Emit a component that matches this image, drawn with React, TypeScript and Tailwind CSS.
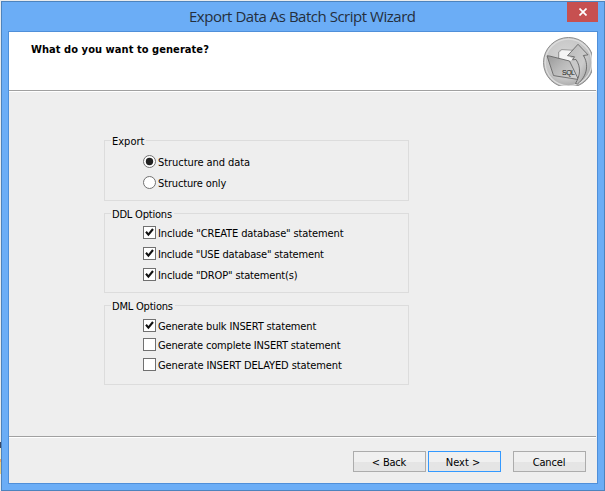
import type { ReactNode } from "react";

const ui = "font-['DejaVu_Sans_Condensed','DejaVu_Sans',sans-serif] [font-stretch:condensed]";

function SqlFolderLogo() {
  return (
    <svg width="49" height="49" viewBox="0 0 49 49" className="block">
      <defs>
        <radialGradient id="disc" cx="0.45" cy="0.4" r="0.62">
          <stop offset="0" stopColor="#d6d6d6" />
          <stop offset="0.7" stopColor="#c6c6c6" />
          <stop offset="1" stopColor="#a2a2a2" />
        </radialGradient>
        <linearGradient id="folder" x1="0" y1="0" x2="1" y2="0.8">
          <stop offset="0" stopColor="#989898" />
          <stop offset="0.5" stopColor="#bababa" />
          <stop offset="1" stopColor="#d2d2d2" />
        </linearGradient>
        <linearGradient id="arrow" x1="0" y1="0" x2="1" y2="1">
          <stop offset="0" stopColor="#b8b8b8" />
          <stop offset="0.6" stopColor="#cccccc" />
          <stop offset="1" stopColor="#999999" />
        </linearGradient>
      </defs>
      <circle cx="25.5" cy="25.5" r="25" fill="url(#disc)" stroke="#8c8c8c" />
      <circle cx="25.5" cy="25.5" r="23.3" fill="none" stroke="#dddddd" strokeWidth="1.2" />
      <path d="M15.5 22 V15 L18.5 12.5 L41 14 V38 L34 41 Z" fill="#c9c9c9" stroke="#858585" strokeWidth="0.7" />
      <path d="M16.5 21.5 V15.5 L19 13.3 L31 14 L27 20 L30 22 L27 24 Z" fill="#f4f4f4" />
      <path d="M4 18.8 L6.5 19 L26.5 24 L35.5 42.5 L13 39 L10.5 38.5 Z" fill="url(#folder)" stroke="#5c5c5c" strokeWidth="0.8" />
      <path
        d="M24.5 18.7 L35 7.3 L45 17.8 L40.3 18.5 C46 27 44.5 39 34.5 47 L32.5 46.5 C37.5 38 38 30 33 22.5 L29.5 22.8 L31.5 19.8 Z"
        fill="url(#arrow)" stroke="#5a5a5a" strokeWidth="0.8" strokeLinejoin="round"
      />
      <text x="19" y="37.8" fontSize="7" fontFamily="Liberation Sans, sans-serif" fill="#1c1c1c" textLength="13">SQL</text>
    </svg>
  );
}

function Option({ kind = "check", on = false, className, children }: {
  kind?: "check" | "radio"; on?: boolean; className: string; children: ReactNode;
}) {
  return (
    <label className="flex h-[13px] items-center gap-[2px] whitespace-nowrap">
      {kind === "radio" ? (
        <svg width="13" height="13" viewBox="0 0 13 13" className="shrink-0">
          <circle cx="6.5" cy="6.5" r="6" fill="#fff" stroke="#707070" />
          {on && <circle cx="6.5" cy="6.5" r="3.7" fill="#212121" />}
        </svg>
      ) : (
        <svg width="13" height="13" viewBox="0 0 13 13" className="shrink-0">
          <rect x="0.5" y="0.5" width="12" height="12" fill="#fff" stroke="#707070" />
          {on && <path d="M3 5.8 L5.4 8.6 L10 3" fill="none" stroke="#111" strokeWidth="2.1" />}
        </svg>
      )}
      <span className={`pt-[4px] ${className}`}>{children}</span>
    </label>
  );
}

function Group({ title, className, titleClass = "", children }: { title: string; className: string; titleClass?: string; children: ReactNode }) {
  return (
    <section className={`flex w-[305px] flex-col border border-[#dcdcdc] pl-[38px] ${className}`}>
      <h2 className="-mt-[7px] -ml-8 mb-[7px] h-[14px] w-fit bg-[#eeeeee] pr-[2px] pl-px leading-[16px]">
        <span className={titleClass}>{title}</span>
      </h2>
      {children}
    </section>
  );
}

function Button({ primary = false, className = "", children }: { primary?: boolean; className?: string; children: ReactNode }) {
  return (
    <button className={`h-[21px] w-[73px] border bg-linear-to-b from-[#f0f0f0] from-50% to-[#e5e5e5] to-50% pt-[2px] leading-[17px] ${primary ? "border-[#3399ff]" : "border-[#acacac]"} ${className}`}>
      {children}
    </button>
  );
}

export default function App() {
  return (
    <div className="flex h-[491px] w-[605px] overflow-hidden bg-[#e9ebed]">
      {/* Sliver of the desktop behind the window */}
      <div className="flex w-px shrink-0 flex-col pt-[442px]">
        <div className="h-[6px] bg-[#3b4763]" />
        <div className="h-[11px] bg-[#f3ecd0]" />
        <div className="h-[3px] bg-[#f0a860]" />
        <div className="h-[12px] bg-[#eccf82]" />
      </div>
      <div className={`mt-px flex h-[490px] w-[604px] shrink-0 flex-col border border-[#4d83bd] bg-[#6badf6] pl-[6px] text-[11px] text-black ${ui}`}>
        <header className="flex h-[29px] shrink-0 items-start pl-[181px]">
          <h1 className="w-[378px] whitespace-nowrap pt-1 font-['Open_Sans','Noto_Sans',sans-serif] text-[15px] leading-5 text-[#252f3d] tracking-[-0.48px] [font-stretch:normal]">
            Export Data As Batch Script Wizard
          </h1>
          <button className="flex h-5 w-[31px] items-center justify-center bg-[#c75050]">
            <svg width="8" height="8" viewBox="0 0 8 8"><path d="M0.5 0.5 L7.5 7.5 M7.5 0.5 L0.5 7.5" stroke="#fff" strokeWidth="1.7" /></svg>
          </button>
        </header>
        <main className="flex h-[453px] w-[590px] flex-col border border-[#4f8fd9] bg-[#eeeeee]">
          <div className="flex h-[58px] shrink-0 items-start justify-between bg-white pr-[5px] pl-[22px]">
            <h2 className="pt-[10px] font-bold leading-[16px] tracking-[0.06px]">What do you want to generate?</h2>
            <div className="pt-[5px]"><SqlFolderLogo /></div>
          </div>
          <div className="h-0.5 w-[587px] shrink-0 border-t border-b border-t-[#a0a0a0] border-b-white" />
          <div className="flex h-[344px] shrink-0 flex-col pt-12 pl-[95px]">
            <Group title="Export" className="h-[61px]">
              <div className="flex flex-col gap-2">
                <Option kind="radio" on className="tracking-[-0.06px]">Structure and data</Option>
                <Option kind="radio" className="tracking-[-0.14px]">Structure only</Option>
              </div>
            </Group>
            <Group title="DDL Options" className="mt-3 h-20" titleClass="tracking-[-0.2px]">
              <div className="-mt-[2px] flex flex-col gap-2">
                <Option on className="tracking-[-0.12px]">Include "CREATE database" statement</Option>
                <Option on className="tracking-[-0.17px]">Include "USE database" statement</Option>
                <Option on className="tracking-[-0.15px]">Include "DROP" statement(s)</Option>
              </div>
            </Group>
            <Group title="DML Options" className="mt-3 h-20" titleClass="tracking-[-0.2px]">
              <div className="-mt-px flex flex-col">
                <Option on className="tracking-[-0.15px]">Generate bulk INSERT statement</Option>
                <div className="mt-1.5 flex flex-col gap-[7px]">
                  <Option className="tracking-[-0.16px]">Generate complete INSERT statement</Option>
                  <Option className="tracking-[-0.1px]">Generate INSERT DELAYED statement</Option>
                </div>
              </div>
            </Group>
          </div>
          <div className="h-0.5 w-[587px] shrink-0 border-t border-b border-t-[#a0a0a0] border-b-white" />
          <footer className="flex justify-end gap-[2px] pt-[13px] pr-[11px]">
            <Button className="pr-px tracking-[-0.2px]">&lt; Back</Button>
            <Button primary className="pr-[3px]">Next &gt;</Button>
            <Button className="ml-[10px] pr-px tracking-[-0.15px]">Cancel</Button>
          </footer>
        </main>
      </div>
    </div>
  );
}
